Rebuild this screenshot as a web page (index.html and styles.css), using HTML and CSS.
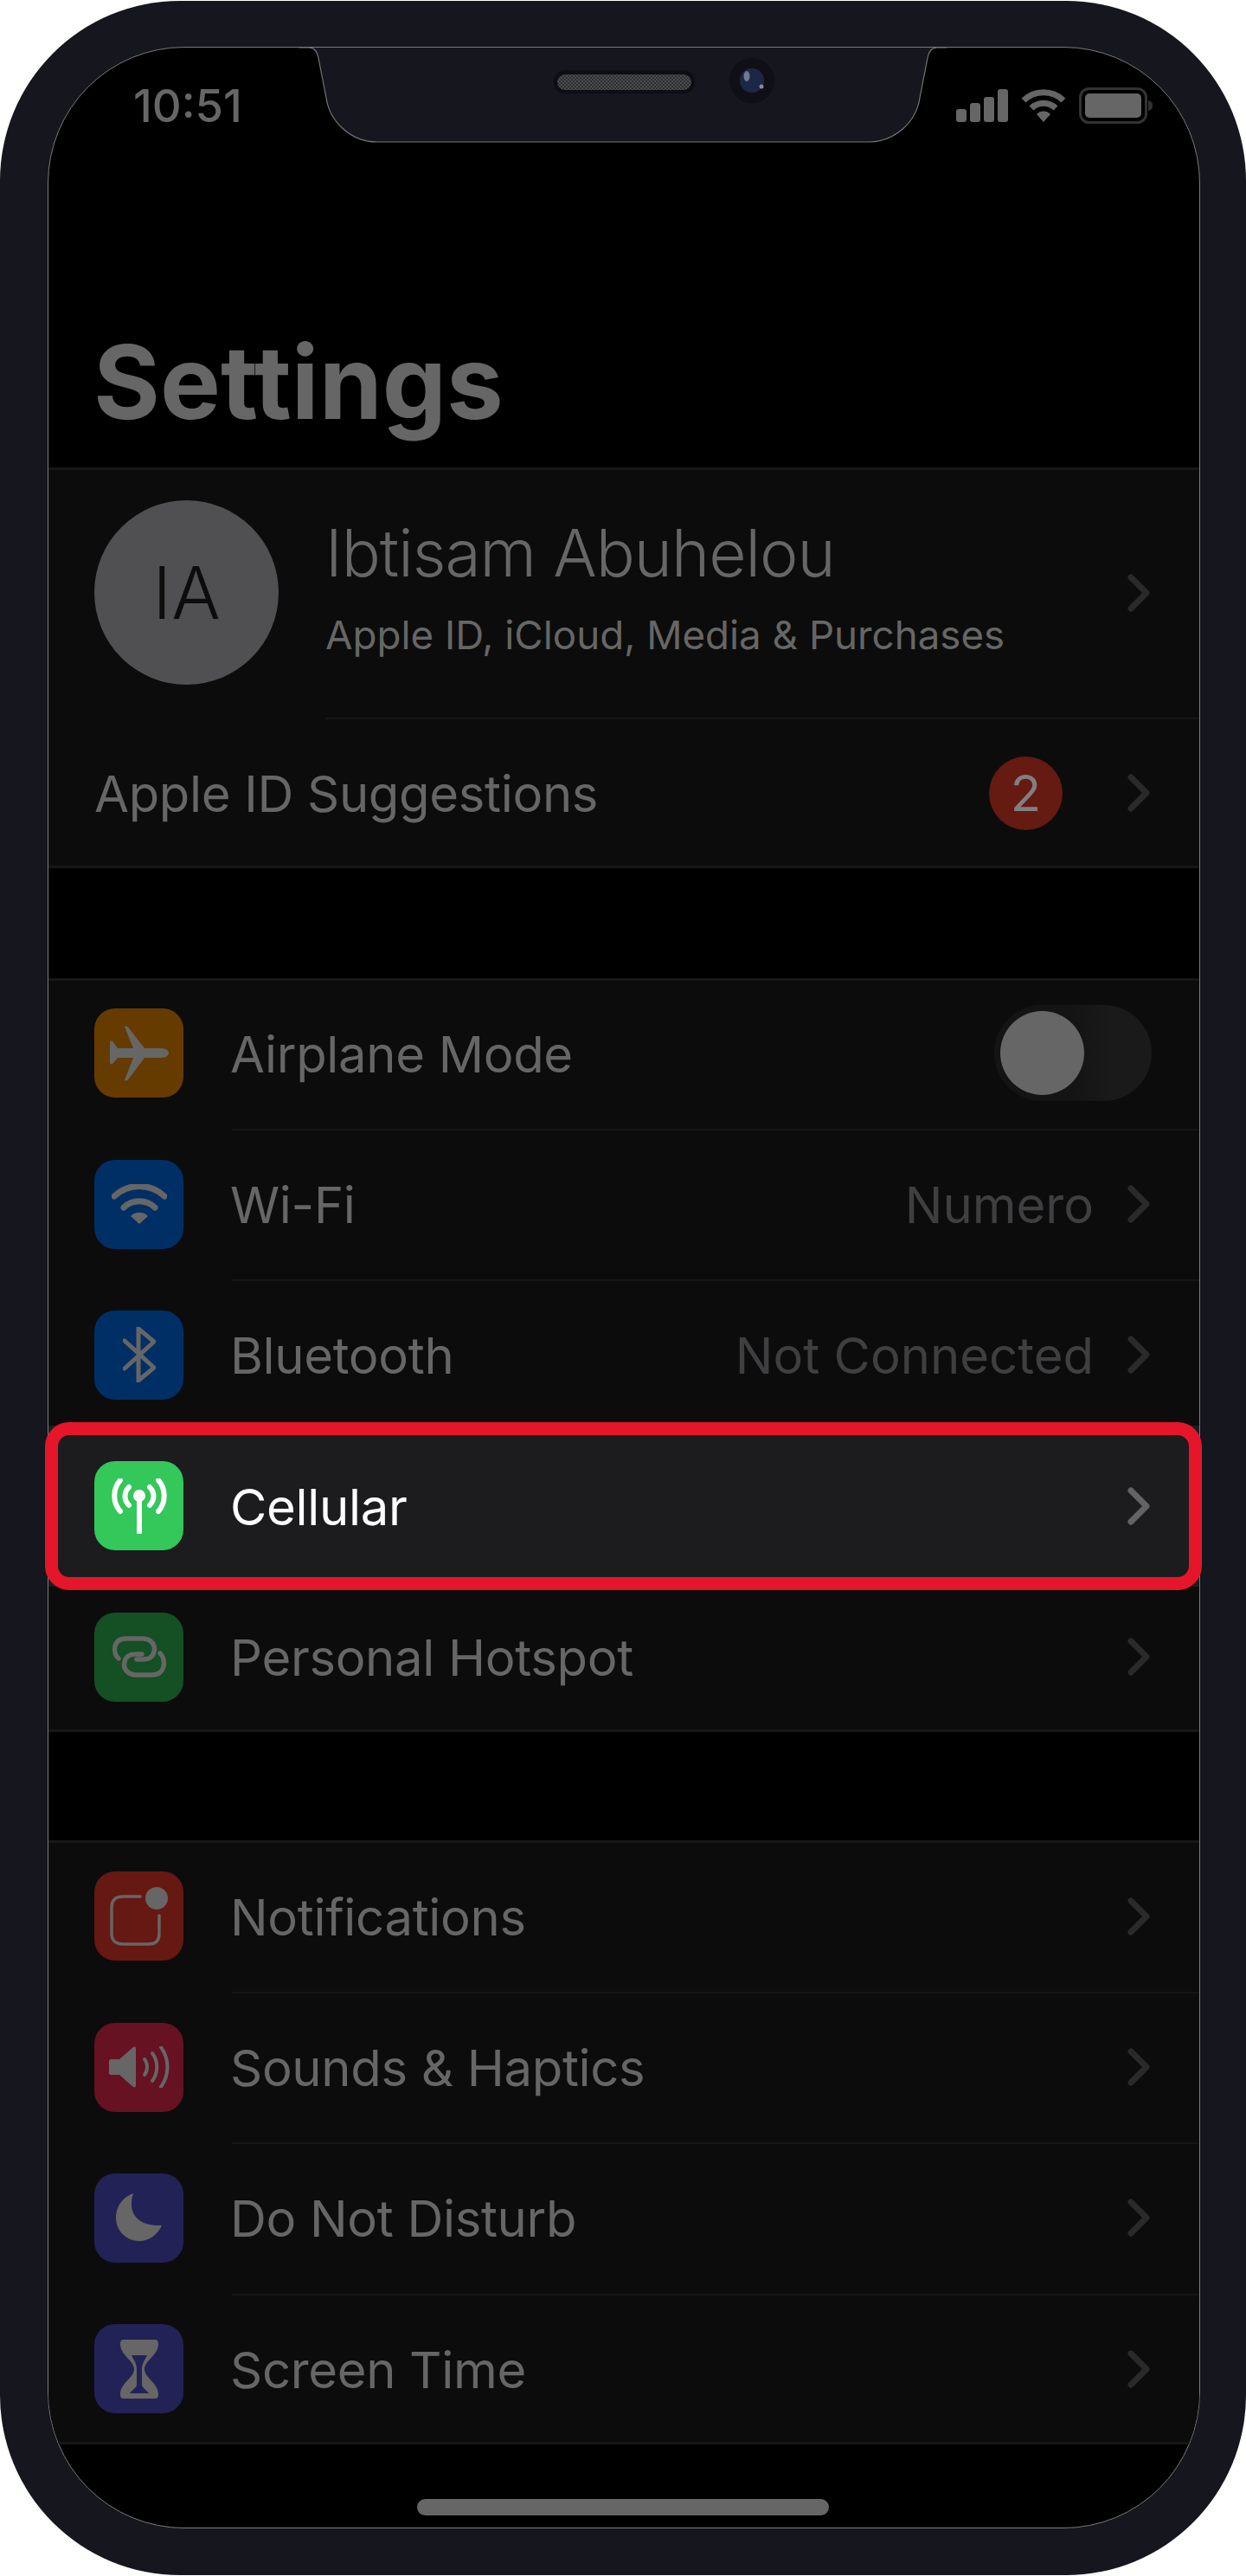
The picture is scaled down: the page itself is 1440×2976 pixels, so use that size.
FILE: index.html
```html
<!DOCTYPE html>
<html lang="en">
<head>
  <meta charset="UTF-8">
  <meta name="viewport" content="width=device-width, initial-scale=1.0">
  <title>Settings</title>
  <link rel="stylesheet" href="styles.css">
</head>
<body>
  <div class="phone">
    <div class="screen">
      <div class="status-bar">
        <span class="time">10:51</span>
        <div class="status-icons">
          <svg class="signal" width="60" height="38" viewBox="0 0 60 38"><rect x="0" y="23" width="12" height="15" rx="3"/><rect x="16" y="16" width="12" height="22" rx="3"/><rect x="32" y="9" width="12" height="29" rx="3"/><rect x="48" y="0" width="12" height="38" rx="3"/></svg>
          <svg class="wifi" width="52" height="38" viewBox="0 0 52 38"><path d="M3 13 A33 33 0 0 1 49 13" fill="none" stroke="#666" stroke-width="7"/><path d="M12 22 A20 20 0 0 1 40 22" fill="none" stroke="#666" stroke-width="7"/><path d="M18 29 A11 11 0 0 1 34 29 L26 38 Z" fill="#666"/></svg>
          <svg class="battery" width="86" height="42" viewBox="0 0 86 42"><rect x="1.5" y="1.5" width="76" height="39" rx="10" fill="none" stroke="#333" stroke-width="3"/><rect x="7" y="7" width="65" height="28" rx="5" fill="#666"/><path d="M80 15 C84 16 85 18 85 21 C85 24 84 26 80 27 Z" fill="#333"/></svg>
        </div>
      </div>

      <h1 class="title">Settings</h1>

      <div class="group profile-group">
        <div class="row profile-row">
          <div class="avatar">IA</div>
          <div class="profile-text">
            <p class="profile-name">Ibtisam Abuhelou</p>
            <p class="profile-sub">Apple ID, iCloud, Media &amp; Purchases</p>
          </div>
          <svg class="chevron" width="26" height="44" viewBox="0 0 26 44"><path d="M4 4 L22 22 L4 40"/></svg>
        </div>
        <div class="row suggest-row">
          <span class="label">Apple ID Suggestions</span>
          <span class="badge">2</span>
          <svg class="chevron" width="26" height="44" viewBox="0 0 26 44"><path d="M4 4 L22 22 L4 40"/></svg>
        </div>
      </div>

      <div class="group network-group">
        <div class="row">
          <div class="app-icon orange">
            <svg width="70" height="64" viewBox="0 0 70 64"><path d="M18 1 C20 0 22 1 23 3 L41 26 L60 26 C66 26 69 29 69 31 C69 34 66 37 60 37 L41 37 L23 61 C22 63 20 64 18 63 L28 37 L10 37 L4 44 C2 45 1 44 1 42 L1 20 C1 18 2 17 4 18 L10 26 L28 26 Z"/></svg>
          </div>
          <span class="label">Airplane Mode</span>
          <div class="toggle"><div class="knob"></div></div>
        </div>
        <div class="row">
          <div class="app-icon blue">
            <svg width="64" height="46" viewBox="0 0 64 46"><path class="stroke" d="M3 14 A42 42 0 0 1 61 14" stroke-width="7"/><path class="stroke" d="M14 27 A26 26 0 0 1 50 27" stroke-width="7"/><path d="M22 37 A14 14 0 0 1 42 37 L32 46 Z"/></svg>
          </div>
          <span class="label">Wi-Fi</span>
          <span class="value">Numero</span>
          <svg class="chevron" width="26" height="44" viewBox="0 0 26 44"><path d="M4 4 L22 22 L4 40"/></svg>
        </div>
        <div class="row">
          <div class="app-icon blue">
            <svg width="38" height="64" viewBox="0 0 38 64"><path class="stroke" d="M2 16 L36 47 L18 62 L18 2 L36 17 L2 48" stroke-width="5"/></svg>
          </div>
          <span class="label">Bluetooth</span>
          <span class="value">Not Connected</span>
          <svg class="chevron" width="26" height="44" viewBox="0 0 26 44"><path d="M4 4 L22 22 L4 40"/></svg>
        </div>
        <div class="row active">
          <div class="app-icon green-bright">
            <svg width="68" height="64" viewBox="0 0 68 64"><g class="white-stroke"><path d="M12 2 C3 12 3 28 12 38"/><path d="M22 10 C16 16 16 25 22 31"/><path d="M46 10 C52 16 52 25 46 31"/><path d="M56 2 C65 12 65 28 56 38"/><path d="M34 20 L34 62"/></g><circle cx="34" cy="20" r="7" fill="#fff"/></svg>
          </div>
          <span class="label">Cellular</span>
          <svg class="chevron" width="26" height="44" viewBox="0 0 26 44"><path d="M4 4 L22 22 L4 40"/></svg>
        </div>
        <div class="row">
          <div class="app-icon green">
            <svg width="66" height="48" viewBox="0 0 66 48"><path class="stroke" d="M9 26 C2 20 2 3 18 3 L36 3 C48 3 52 12 50 18 C49 24 44 27 38 27 L30 27" stroke-width="5.5"/><path class="stroke" d="M57 20 C64 26 64 45 48 45 L30 45 C18 45 14 36 16 30 C17 24 22 21 28 21 L36 21" stroke-width="5.5"/></svg>
          </div>
          <span class="label">Personal Hotspot</span>
          <svg class="chevron" width="26" height="44" viewBox="0 0 26 44"><path d="M4 4 L22 22 L4 40"/></svg>
        </div>
      </div>

      <div class="group apps-group">
        <div class="row">
          <div class="app-icon red">
            <svg width="68" height="68" viewBox="0 0 68 68"><path class="stroke" d="M35 11 L15 11 C7 11 2 15 2 24 L2 54 C2 62 7 66 15 66 L45 66 C53 66 57 62 57 54 L57 33" stroke-width="3.5"/><circle cx="54" cy="13" r="13"/></svg>
          </div>
          <span class="label">Notifications</span>
          <svg class="chevron" width="26" height="44" viewBox="0 0 26 44"><path d="M4 4 L22 22 L4 40"/></svg>
        </div>
        <div class="row">
          <div class="app-icon pink">
            <svg width="70" height="48" viewBox="0 0 70 48"><path d="M2 15 L12 15 L28 1 C30 0 31 1 31 3 L31 45 C31 47 30 48 28 47 L12 33 L2 33 C1 33 0 32 0 31 L0 17 C0 16 1 15 2 15 Z"/><path class="stroke" d="M41 15 C45 20 45 28 41 33" stroke-width="4"/><path class="stroke" d="M50 8 C57 17 57 31 50 40" stroke-width="4"/><path class="stroke" d="M60 1 C70 15 70 33 60 47" stroke-width="4"/></svg>
          </div>
          <span class="label">Sounds &amp; Haptics</span>
          <svg class="chevron" width="26" height="44" viewBox="0 0 26 44"><path d="M4 4 L22 22 L4 40"/></svg>
        </div>
        <div class="row">
          <div class="app-icon indigo">
            <svg width="54" height="56" viewBox="0 0 54 56"><path d="M20 0 C14 18 20 38 53 37 C48 48 38 55 27 55 C12 55 0 43 0 28 C0 15 8 4 20 0 Z"/></svg>
          </div>
          <span class="label">Do Not Disturb</span>
          <svg class="chevron" width="26" height="44" viewBox="0 0 26 44"><path d="M4 4 L22 22 L4 40"/></svg>
        </div>
        <div class="row">
          <div class="app-icon indigo">
            <svg width="44" height="68" viewBox="0 0 44 68"><path fill-rule="evenodd" d="M4 0 L40 0 C43 0 44 2 44 5 C44 18 28 24 28 34 C28 44 44 50 44 63 C44 66 43 68 40 68 L4 68 C1 68 0 66 0 63 C0 50 16 44 16 34 C16 24 0 18 0 5 C0 2 1 0 4 0 Z M13 18 L31 18 C28 24 25 28 25 34 L25 52 C25 55 31 59 33 62 L11 62 C13 59 19 55 19 52 L19 34 C19 28 16 24 13 18 Z"/></svg>
          </div>
          <span class="label">Screen Time</span>
          <svg class="chevron" width="26" height="44" viewBox="0 0 26 44"><path d="M4 4 L22 22 L4 40"/></svg>
        </div>
      </div>

      <div class="home-bar"></div>
    </div>

    <!-- notch sits over the top of the screen -->
    <svg class="notch" width="748" height="112" viewBox="0 0 748 112">
      <defs>
        <pattern id="mesh" width="4" height="4" patternUnits="userSpaceOnUse">
          <rect width="4" height="4" fill="#2f2f32"/>
          <rect width="2" height="2" fill="#4c4c4f"/>
          <rect x="2" y="2" width="2" height="2" fill="#4c4c4f"/>
        </pattern>
      </defs>
      <path d="M0 0 L11 0 C18 0 21 6 22 12 L31 58 C35 86 60 109 90 109 L658 109 C688 109 713 86 717 58 L726 12 C727 6 730 0 737 0 L748 0" fill="#15161e" stroke="#777" stroke-width="1.2"/>
      <rect x="294" y="26" width="163" height="27" rx="13" fill="#0d0e13"/>
      <rect x="298" y="31" width="155" height="18" rx="9" fill="url(#mesh)"/>
      <circle cx="523" cy="38" r="26" fill="#0f1015"/>
      <circle cx="523" cy="38" r="14" fill="#1c2748"/>
      <ellipse cx="517" cy="33" rx="3.5" ry="6" fill="#6f7a92"/>
      <circle cx="534" cy="45" r="2.5" fill="#8a8a90"/>
    </svg>

    <!-- red highlight box around the Cellular row -->
    <div class="highlight"></div>
  </div>
</body>
</html>
```

FILE: styles.css
```css
body {
  margin: 0;
  background: #fff;
  font-family: 'Inter', 'Liberation Sans', sans-serif;
}

p {
  margin: 0;
}

.phone {
  position: relative;
  box-sizing: border-box;
  width: 1440px;
  height: 2974px;
  margin-top: 1px;
  padding: 53px 53px 54px 55px;
  background: #15161e;
  border-radius: 208px;
}

.screen {
  box-sizing: border-box;
  height: 100%;
  display: flex;
  flex-direction: column;
  position: relative;
  overflow: hidden;
  background: #000;
  border: 1px solid #7a7a7a;
  border-radius: 158px;
}

.status-bar {
  display: flex;
  justify-content: space-between;
  align-items: center;
  height: 42px;
  margin-top: 46px;
  padding: 0 53px 0 98px;
}

.time {
  color: #666;
  font-size: 52.5px;
  font-weight: 500;
}

.status-icons {
  display: flex;
  align-items: center;
  gap: 15px;
}

.signal rect {
  fill: #666;
}

.title {
  margin: 0;
  padding: 228.5px 0 0 52px;
  height: 397px;
  box-sizing: border-box;
  color: #666;
  font-size: 117.5px;
  font-weight: 700;
  line-height: 138px;
}

.group {
  flex-shrink: 0;
  background: #0c0c0c;
  box-shadow: inset 0 3px #171717, inset 0 -3px #171717;
}

.network-group {
  margin-top: 126.5px;
}

.apps-group {
  margin-top: 125px;
}

.row {
  position: relative;
  display: flex;
  align-items: center;
  height: 174.4px;
  padding: 0 57px 0 53px;
}

.row + .row::before {
  content: "";
  position: absolute;
  top: 0;
  left: 212px;
  right: 0;
  height: 2px;
  background: #161616;
}

.profile-row {
  height: 289px;
}

.profile-row + .row::before {
  left: 320px;
}

.suggest-row {
  height: 174px;
}

.avatar {
  display: flex;
  align-items: center;
  justify-content: center;
  flex-shrink: 0;
  width: 213px;
  height: 213px;
  border-radius: 50%;
  background: #505052;
  color: #0c0c0c;
  font-size: 84px;
  font-weight: 300;
}

.profile-text {
  flex: 1;
  margin-left: 54px;
  margin-top: -14px;
}

.profile-name {
  color: #666;
  font-size: 75px;
  font-weight: 300;
  letter-spacing: -1px;
  line-height: 88px;
}

.profile-sub {
  margin-top: 24px;
  color: #666;
  font-size: 45.7px;
  line-height: 54px;
}

.label {
  flex: 1;
  padding-top: 2px;
  color: #666;
  font-size: 58px;
  font-weight: 400;
  letter-spacing: -0.33px;
}

.value {
  padding-top: 2px;
  color: #3f3f41;
  font-size: 58px;
  margin-right: 39px;
}

.badge {
  display: flex;
  align-items: center;
  justify-content: center;
  width: 85px;
  height: 85px;
  margin-right: 75px;
  border-radius: 50%;
  background: #651a12;
  color: #808080;
  font-size: 58px;
}

.chevron {
  flex-shrink: 0;
}

.chevron path {
  fill: none;
  stroke: #2a2a2b;
  stroke-width: 7;
  stroke-linecap: round;
  stroke-linejoin: round;
}

.app-icon {
  display: flex;
  align-items: center;
  justify-content: center;
  flex-shrink: 0;
  width: 103px;
  height: 103px;
  margin-right: 54px;
  border-radius: 24px;
}

.app-icon svg {
  fill: #666;
}

.app-icon .stroke {
  fill: none;
  stroke: #666;
  stroke-linecap: round;
}

.orange { background: #663b00; }
.blue { background: #002f66; }
.green { background: #154f24; }
.green-bright { background: #34c759; }
.red { background: #661812; }
.pink { background: #661222; }
.indigo { background: #232256; }

.white-stroke {
  fill: none;
  stroke: #fff;
  stroke-width: 6;
  stroke-linecap: round;
}

.toggle {
  position: relative;
  width: 182px;
  height: 111px;
  margin-right: -2px;
  border-radius: 56px;
  background: linear-gradient(90deg, #141415 50%, #1a1a1b 75%);
}

.knob {
  position: absolute;
  top: 7px;
  left: 7px;
  width: 97px;
  height: 97px;
  border-radius: 50%;
  background: #666;
}

.row.active {
  background: #1c1c1e;
  box-shadow: 0 0 0 6px #1c1c1e;
}

.row.active::before {
  display: none;
}

.row.active .label {
  color: #fff;
}

.row.active .chevron path {
  stroke: #636366;
}

.highlight {
  position: absolute;
  top: 1642px;
  left: 52px;
  box-sizing: border-box;
  width: 1337px;
  height: 194px;
  border: 15px solid #e5162a;
  border-radius: 28px;
}

.home-bar {
  position: absolute;
  left: 426px;
  bottom: 14px;
  width: 476px;
  height: 19px;
  border-radius: 10px;
  background: #666;
}

.notch {
  position: absolute;
  top: 54px;
  left: 346px;
}
```
